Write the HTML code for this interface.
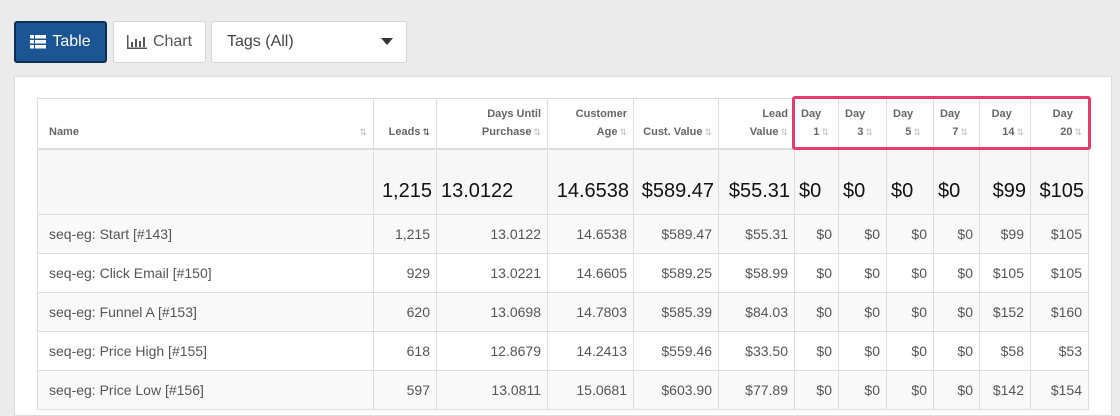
<!DOCTYPE html>
<html><head><meta charset="utf-8"><style>
body{margin:0;width:1120px;height:410px;background:#ebebeb;font-family:"Liberation Sans",sans-serif;overflow:hidden;position:relative}
.btn{position:absolute;top:21px;height:42px;box-sizing:border-box;border:1px solid #d6d6d6;background:#fff;border-radius:3px;font-size:16px;color:#555;display:flex;align-items:center}
.b1{left:14px;width:93px;background:#1b5593;border:2px solid #0f2f52;color:#fff;justify-content:center}
.b2{left:113px;width:93px;justify-content:center}
.b3{left:211px;width:196px;padding-left:15px;color:#444}
.panel{position:absolute;left:14px;top:76px;width:1098px;height:340px;background:#fff;border:1px solid #ddd;box-sizing:border-box}
table{position:absolute;left:37px;top:98px;border-collapse:collapse;table-layout:fixed;width:1052px}
td,th{border:1px solid #ddd;padding:0 6px;text-align:right;overflow:hidden;white-space:nowrap}
th{height:42px;font-size:11px;color:#666;font-weight:bold;vertical-align:bottom;padding-bottom:7px;padding-top:0;line-height:18px;border-bottom:2px solid #ddd;border-top:1px solid #ddd}
th:first-child{text-align:left;padding-left:11px}
.s{color:#bbb;font-size:9px;font-weight:normal;margin-left:2px}
tr.sum td{height:46px;font-size:20px;color:#111;background:#f7f7f7;padding:18px 4px 0;vertical-align:middle}
tr.r td{height:38px;font-size:14px;color:#555;padding-top:0;padding-bottom:0}
tr.r:nth-child(odd) td{background:#f9f9f9}
tr.r td:first-child{text-align:left;padding-left:11px}
.red{position:absolute;left:792px;top:96px;width:299px;height:54px;border:3px solid #e83a6c;border-radius:3px;box-sizing:border-box}
</style></head><body>
<div class="btn b1"><svg width="16" height="14" viewBox="0 0 16 14" style="margin-right:6px"><g fill="#fff"><rect x="0" y="0" width="4" height="3.5"/><rect x="5" y="0" width="11" height="3.5"/><rect x="0" y="5" width="4" height="3.5"/><rect x="5" y="5" width="11" height="3.5"/><rect x="0" y="10" width="4" height="3.5"/><rect x="5" y="10" width="11" height="3.5"/></g></svg>Table</div>
<div class="btn b2"><svg width="20" height="14" viewBox="0 0 20 14" style="margin-right:6px"><g fill="#555"><rect x="0" y="0" width="1.5" height="14"/><rect x="0" y="12.5" width="20" height="1.5"/><rect x="4" y="7" width="2" height="5"/><rect x="8" y="4" width="2" height="8"/><rect x="12" y="6" width="2" height="6"/><rect x="16" y="2" width="2" height="10"/></g></svg>Chart</div>
<div class="btn b3">Tags (All)<svg width="12" height="7" style="position:absolute;right:13px;top:16px"><path d="M0 0H12L6 7Z" fill="#333"/></svg></div>
<div class="panel"></div>
<table>
<colgroup><col style="width:336px"><col style="width:63px"><col style="width:111px"><col style="width:86px"><col style="width:85px"><col style="width:76px"><col style="width:44px"><col style="width:48px"><col style="width:47px"><col style="width:46px"><col style="width:51px"><col style="width:58px"></colgroup>
<tr><th>Name<span class="s" style="float:right">⇅</span></th><th>Leads<span class="s" style="color:#333">⇅</span></th><th>Days Until<br>Purchase<span class="s">⇅</span></th><th>Customer<br>Age<span class="s">⇅</span></th><th>Cust. Value<span class="s">⇅</span></th><th>Lead<br>Value<span class="s">⇅</span></th><th style="text-align:left">Day<br>&nbsp;&nbsp;&nbsp;&nbsp;1<span class="s">⇅</span></th><th style="text-align:left">Day<br>&nbsp;&nbsp;&nbsp;&nbsp;3<span class="s">⇅</span></th><th style="text-align:left">Day<br>&nbsp;&nbsp;&nbsp;&nbsp;5<span class="s">⇅</span></th><th style="text-align:left">Day<br>&nbsp;&nbsp;&nbsp;&nbsp;7<span class="s">⇅</span></th><th style="text-align:right">Day&nbsp;&nbsp;&nbsp;&nbsp;<br>14<span class="s">⇅</span></th><th>Day&nbsp;&nbsp;&nbsp;<br>20<span class="s">⇅</span></th></tr>
<tr class="sum"><td></td><td>1,215</td><td style="text-align:left">13.0122</td><td>14.6538</td><td>$589.47</td><td>$55.31</td><td style="text-align:left">$0</td><td style="text-align:left">$0</td><td style="text-align:left">$0</td><td style="text-align:left">$0</td><td>$99</td><td>$105</td></tr>
<tr class="r"><td>seq-eg: Start [#143]</td><td>1,215</td><td>13.0122</td><td>14.6538</td><td>$589.47</td><td>$55.31</td><td>$0</td><td>$0</td><td>$0</td><td>$0</td><td>$99</td><td>$105</td></tr>
<tr class="r"><td>seq-eg: Click Email [#150]</td><td>929</td><td>13.0221</td><td>14.6605</td><td>$589.25</td><td>$58.99</td><td>$0</td><td>$0</td><td>$0</td><td>$0</td><td>$105</td><td>$105</td></tr>
<tr class="r"><td>seq-eg: Funnel A [#153]</td><td>620</td><td>13.0698</td><td>14.7803</td><td>$585.39</td><td>$84.03</td><td>$0</td><td>$0</td><td>$0</td><td>$0</td><td>$152</td><td>$160</td></tr>
<tr class="r"><td>seq-eg: Price High [#155]</td><td>618</td><td>12.8679</td><td>14.2413</td><td>$559.46</td><td>$33.50</td><td>$0</td><td>$0</td><td>$0</td><td>$0</td><td>$58</td><td>$53</td></tr>
<tr class="r"><td>seq-eg: Price Low [#156]</td><td>597</td><td>13.0811</td><td>15.0681</td><td>$603.90</td><td>$77.89</td><td>$0</td><td>$0</td><td>$0</td><td>$0</td><td>$142</td><td>$154</td></tr>
</table>
<div class="red"></div>
</body></html>
